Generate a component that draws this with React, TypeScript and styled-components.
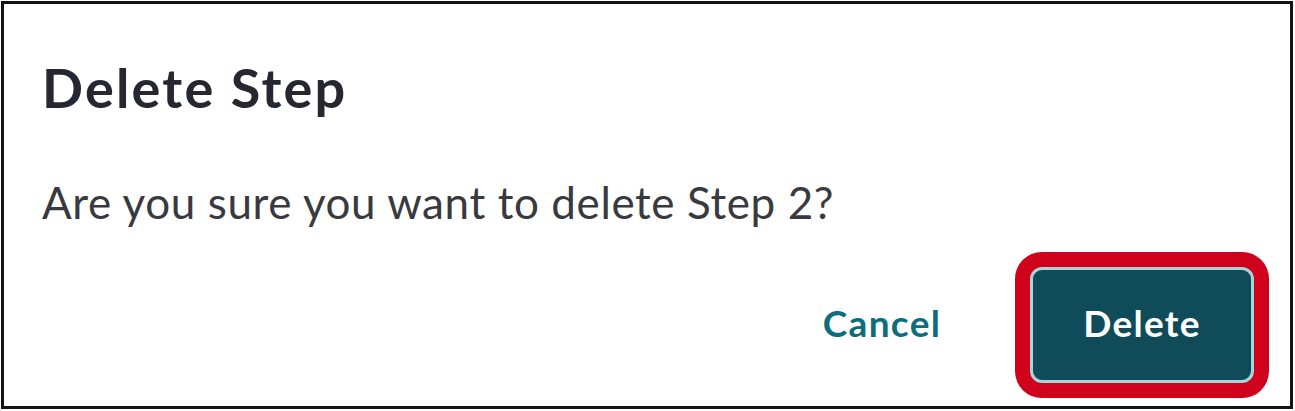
import React from "react"
import styled, { createGlobalStyle } from "styled-components"

const GlobalStyle = createGlobalStyle`
  html, body {
    margin: 0;
    padding: 0;
    background: #ffffff;
  }
  body {
    font-family: Lato, "Open Sans", sans-serif;
  }
`

const Frame = styled.section`
  box-sizing: border-box;
  margin: 1px;
  width: 1292px;
  height: 408px;
  border: 3px solid #141414;
  background: #ffffff;
  display: flex;
  flex-direction: column;
  padding: 0 20px 0 38px;
`

const Title = styled.h2`
  margin: 54px 0 0;
  font-size: 54px;
  line-height: 60px;
  font-weight: 700;
  letter-spacing: 2.2px;
  color: #252831;
`

const Message = styled.p`
  margin: 56px 0 0;
  font-size: 44px;
  line-height: 56px;
  font-weight: 400;
  letter-spacing: 0.6px;
  color: #383a3f;
`

const Footer = styled.div`
  display: flex;
  justify-content: flex-end;
  align-items: center;
  gap: 36px;
  margin-top: auto;
  padding: 0 16px 23px 0;
`

const Button = styled.button<{ $primary?: boolean }>`
  box-sizing: border-box;
  width: 224px;
  height: 116px;
  padding: 0 0 5px;
  border-radius: 12px;
  font-family: Lato, "Open Sans", sans-serif;
  font-size: 37px;
  font-weight: 700;
  letter-spacing: 1.3px;
  cursor: pointer;
  border: 3px solid ${(p) => (p.$primary ? "#a8d3da" : "transparent")};
  background: ${(p) => (p.$primary ? "#0f4b59" : "transparent")};
  color: ${(p) => (p.$primary ? "#ffffff" : "#0f6c7c")};
  box-shadow: ${(p) => (p.$primary ? "0 0 0 15px #d0021b" : "none")};
`

export default function App() {
  return (
    <>
      <GlobalStyle />
      <Frame role="dialog" aria-labelledby="delete-step-title">
        <Title id="delete-step-title">Delete Step</Title>
        <Message>Are you sure you want to delete Step 2?</Message>
        <Footer>
          <Button type="button">Cancel</Button>
          <Button type="button" $primary>
            Delete
          </Button>
        </Footer>
      </Frame>
    </>
  )
}
